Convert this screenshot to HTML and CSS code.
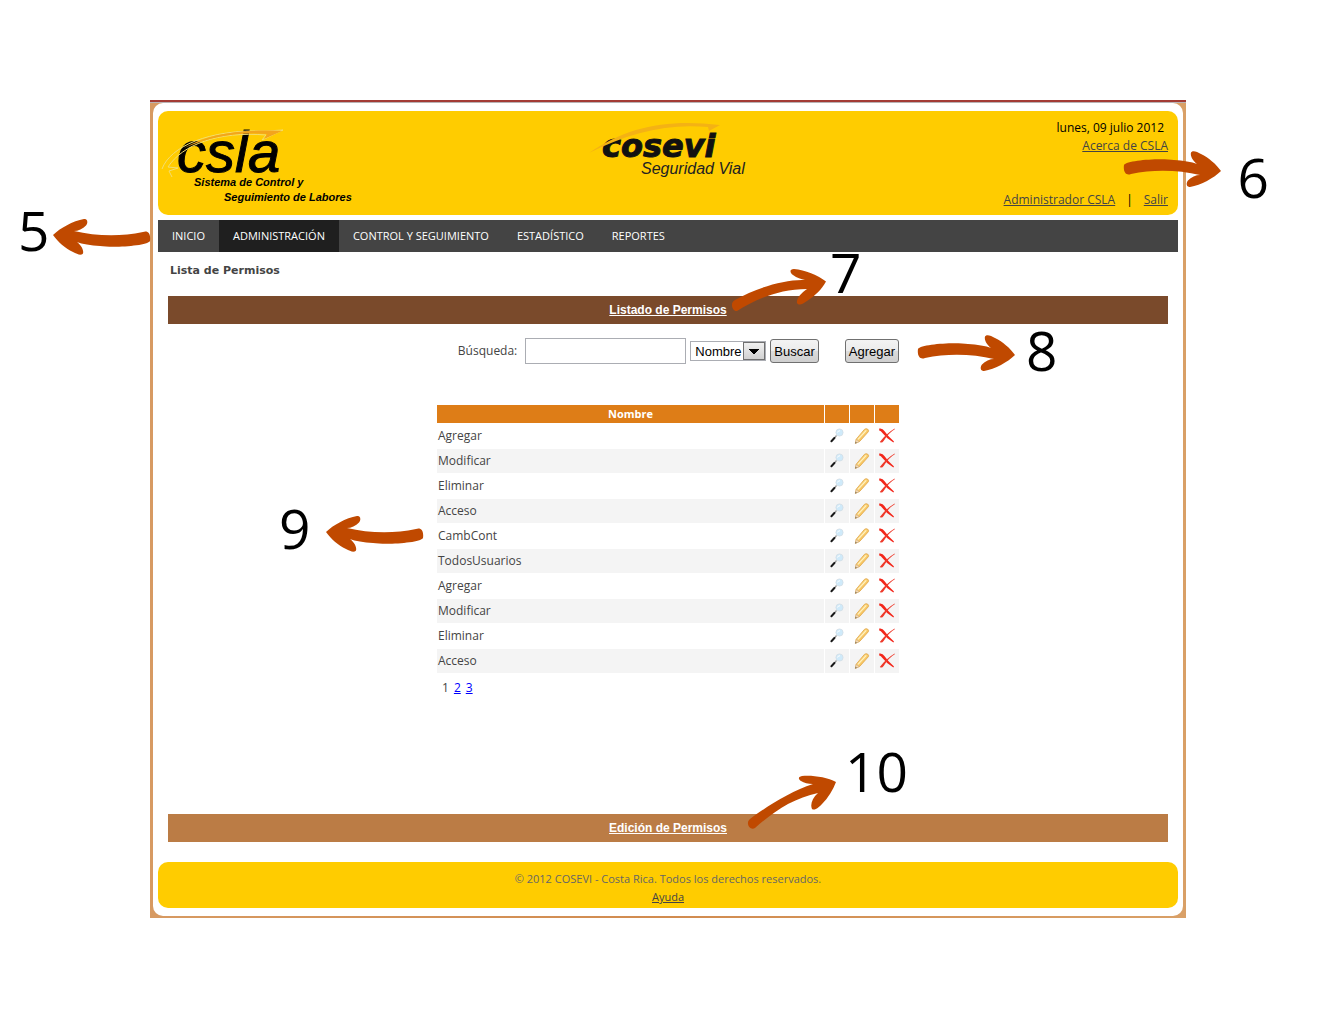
FILE: index.html
```html
<!DOCTYPE html>
<html lang="es">
<head>
<meta charset="utf-8">
<title>CSLA - Lista de Permisos</title>
<link rel="stylesheet" href="styles.css">
</head>
<body>
<svg class="sprite" aria-hidden="true">
  <defs>
    <linearGradient id="wood-pencil" x1="0" y1="0" x2="1" y2="1"><stop offset="0" stop-color="#ffe9a0"/><stop offset="1" stop-color="#f2ad35"/></linearGradient>
    <symbol id="view" viewBox="0 0 16 16">
      <circle cx="10.500" cy="4.500" r="3.600" fill="#cfeafa" stroke="#d3dde4" stroke-width=".8"/>
      <path d="M8.500 4.500Q9 2.500 11 2.800" stroke="#fff" fill="none"/>
      <path d="M7.500 7.500L5.500 10" stroke="#9a9a9a" stroke-width="1.3"/>
      <path d="M5.400 10L2.400 13.200" stroke="#181818" stroke-width="2" stroke-linecap="round"/>
    </symbol>
    <symbol id="edit" viewBox="0 0 16 16">
      <path d="M1.400 15.400L2.200 11.200L10.500 1.300Q12 .2 13.600 1.100Q15.200 2.200 14.300 3.800L5.800 13.300Z" fill="url(#wood-pencil)" stroke="#e0a548" stroke-width=".8"/>
      <path d="M4 11.400L12.300 2.400" stroke="#fff3c4" stroke-width="1.200"/>
      <path d="M1.400 15.400L2.300 11.600L5.200 13.500Z" fill="#f5dfc0" stroke="#c9a274" stroke-width=".5"/>
      <path d="M1.200 15.600L1.700 13.800L2.800 14.800Z" fill="#665"/>
    </symbol>
    <symbol id="delete" viewBox="0 0 16 16">
      <path d="M.2.600Q3.600 0 5.400 3Q8.800 8.200 15 13.400L14.400 14.400Q7.500 10.600 3.200 4.800Q2 2.600.2 2.400Z" fill="#f3271b"/>
      <path d="M15.600.400L15.800 1.200Q9.800 4.600 4.600 13Q3 15.400.8 14Q6.800 5.800 15.600.400Z" fill="#ee3a2b"/>
    </symbol>
    <symbol id="arrow" viewBox="0 0 98 36">
      <path d="M0 16C7 9 20 2 31 0C35-.3 35 4 33 6.500C30 10 25 12 21 12C42 17 67 18 90 13C95 11 98 15 97 22C94 27 60 29 47 27C38 26.500 29 25 24 23C28 26 31 31 30 34.500C28 37 24 35 20 33C12 29 5 23 0 16Z" fill="#c04900"/>
    </symbol>
  </defs>
</svg>

<main class="stage">
  <div class="frame">
    <div class="panel">
      <header class="header">
        <svg class="logo-csla" viewBox="0 0 200 104" role="img" aria-label="CSLA">
          <text class="csla-name" x="19" y="61">csla</text>
          <path d="M4 58C12 36 50 18 108 20L125 19L104 29L108 24C60 20 24 34 10 56L20 57L11 60L14 66" fill="none" stroke="#f3dd70" stroke-width="1"/>
          <path d="M26 37C50 23 80 18 124 20L106 28L109 23C80 21 54 25 26 37Z" fill="#f3a51c"/>
          <text class="csla-tag" x="36" y="75">Sistema de Control y</text>
          <text class="csla-tag" x="66" y="90">Seguimiento de Labores</text>
        </svg>
        <svg class="logo-cosevi" viewBox="0 0 170 70" role="img" aria-label="Cosevi">
          <text class="cosevi-name" x="19" y="46">cosevi</text>
          <path d="M6 42C45 15 85 8 137 14L126 20L125 16C85 12 45 22 6 42Z" fill="#f4b214"/>
          <text class="cosevi-tag" x="58" y="63">Seguridad Vial</text>
        </svg>
        <div class="session">
          <div class="session-info">
            <span class="date">lunes, 09 julio 2012</span>
            <a href="#acerca">Acerca de CSLA</a>
          </div>
          <div class="session-links">
            <a href="#usuario">Administrador CSLA</a>
            <span>|</span>
            <a href="#salir">Salir</a>
          </div>
        </div>
      </header>

      <nav class="menu">
        <a href="#inicio">INICIO</a>
        <a class="active" href="#administracion">ADMINISTRACIÓN</a>
        <a href="#control">CONTROL Y SEGUIMIENTO</a>
        <a href="#estadistico">ESTADÍSTICO</a>
        <a href="#reportes">REPORTES</a>
      </nav>

      <div class="content">
        <h1>Lista de Permisos</h1>
        <h2 class="section-bar"><a href="#listado">Listado de Permisos</a></h2>

        <section class="listing" id="listado">
          <form class="search">
            <label for="busqueda">Búsqueda:</label>
            <input id="busqueda" type="text">
            <select aria-label="Campo de búsqueda"><option>Nombre</option></select>
            <button type="button">Buscar</button>
            <button class="add" type="button">Agregar</button>
          </form>

          <table class="permissions">
            <thead><tr><th>Nombre</th><th class="tool"></th><th class="tool"></th><th class="tool"></th></tr></thead>
            <tbody>
              <tr><td>Agregar</td><td><svg><use href="#view"/></svg></td><td><svg><use href="#edit"/></svg></td><td><svg><use href="#delete"/></svg></td></tr>
              <tr><td>Modificar</td><td><svg><use href="#view"/></svg></td><td><svg><use href="#edit"/></svg></td><td><svg><use href="#delete"/></svg></td></tr>
              <tr><td>Eliminar</td><td><svg><use href="#view"/></svg></td><td><svg><use href="#edit"/></svg></td><td><svg><use href="#delete"/></svg></td></tr>
              <tr><td>Acceso</td><td><svg><use href="#view"/></svg></td><td><svg><use href="#edit"/></svg></td><td><svg><use href="#delete"/></svg></td></tr>
              <tr><td>CambCont</td><td><svg><use href="#view"/></svg></td><td><svg><use href="#edit"/></svg></td><td><svg><use href="#delete"/></svg></td></tr>
              <tr><td>TodosUsuarios</td><td><svg><use href="#view"/></svg></td><td><svg><use href="#edit"/></svg></td><td><svg><use href="#delete"/></svg></td></tr>
              <tr><td>Agregar</td><td><svg><use href="#view"/></svg></td><td><svg><use href="#edit"/></svg></td><td><svg><use href="#delete"/></svg></td></tr>
              <tr><td>Modificar</td><td><svg><use href="#view"/></svg></td><td><svg><use href="#edit"/></svg></td><td><svg><use href="#delete"/></svg></td></tr>
              <tr><td>Eliminar</td><td><svg><use href="#view"/></svg></td><td><svg><use href="#edit"/></svg></td><td><svg><use href="#delete"/></svg></td></tr>
              <tr><td>Acceso</td><td><svg><use href="#view"/></svg></td><td><svg><use href="#edit"/></svg></td><td><svg><use href="#delete"/></svg></td></tr>
            </tbody>
          </table>
          <div class="pager"><span>1</span><a href="#p2">2</a><a href="#p3">3</a></div>
        </section>

        <h2 class="section-bar light"><a href="#edicion">Edición de Permisos</a></h2>
      </div>

      <footer class="footer">
        <span>© 2012 COSEVI - Costa Rica. Todos los derechos reservados.</span>
        <a href="#ayuda">Ayuda</a>
      </footer>
    </div>
  </div>

  <span class="note n5">5</span><svg class="arrow a5"><use href="#arrow"/></svg>
  <span class="note n6">6</span><svg class="arrow turned a6"><use href="#arrow"/></svg>
  <span class="note n7">7</span>
  <svg class="arrow a7" viewBox="731 268 96 44"><path d="M826 281.500C818 275 805 270 794 269C789 269 790 273 793 275C797 278 801 279 805 280C785 279 756 288 735 300C729 303 733 312 737 311C755 300 778 289 807 289C801 293 796 299 797 303C799 306 803 304 807 301C815 296 822 289 826 281.500Z" fill="#c04900"/></svg>
  <span class="note n8">8</span><svg class="arrow turned a8"><use href="#arrow"/></svg>
  <span class="note n9">9</span><svg class="arrow a9"><use href="#arrow"/></svg>
  <span class="note n10">10</span>
  <svg class="arrow a10" viewBox="747 775 90 55"><path d="M836 782C827 777 812 775 802 776C797 777 799 780 801 781C804 783 808 784 813 784C791 791 766 807 750 819C745 823 750 831 755 828C774 811 794 798 818 793C812 798 810 805 812 809C815 811 819 807 822 804C828 798 833 790 836 782Z" fill="#c04900"/></svg>
</main>
</body>
</html>
```
FILE: styles.css
```css
* { box-sizing: border-box; }

body {
  margin: 0;
  background: #fff;
  color: #444;
  font: 11px/18px "Open Sans", "Noto Sans", sans-serif;
}

a { color: #444; }
svg { display: block; overflow: visible; }
.sprite { position: absolute; width: 0; height: 0; }

.stage {
  position: relative;
  padding: 100px 150px;
}

.frame {
  padding: 1px 3px 2px;
  border-top: 2px solid #a33b35;
  background: linear-gradient(90deg, #d79a62, #d18b4f 50%, #d9a067);
  box-shadow: inset 0 1px #b9b3b5;
}

.panel {
  padding: 8px 5px;
  border-radius: 10px;
  background: #fff;
}

.header {
  display: grid;
  grid-template-columns: 1fr 170px 1fr;
  height: 104px;
  border-radius: 10px;
  background: #fc0;
}

.logo-csla { width: 200px; height: 104px; }
.logo-cosevi { width: 170px; height: 70px; }
.csla-name { font: italic 58px "Liberation Sans", Arial, sans-serif; stroke: #000; stroke-width: 1px; fill: #000; }
.csla-tag { font: italic bold 11px "Liberation Sans", Arial, sans-serif; fill: #000; }
.cosevi-name { font: italic bold 32px "DejaVu Sans", Verdana, sans-serif; stroke: #111; stroke-width: 1px; fill: #111; }
.cosevi-tag { font: italic 16px "Liberation Sans", Arial, sans-serif; fill: #222; }

.session {
  display: flex;
  flex-direction: column;
  justify-content: space-between;
  align-items: flex-end;
  padding: 8px 10px 6px;
  font-size: 12px;
}
.session-info { display: flex; flex-direction: column; align-items: flex-end; }
.date { padding-right: 4px; color: #000; }
.session-links { display: flex; gap: 11px; color: #000; }

.menu {
  display: flex;
  margin-top: 5px;
  background: #444;
}
.menu a {
  padding: 0 14px;
  color: #fff;
  line-height: 32px;
  text-decoration: none;
}
.menu .active { background: #1f1f1f; }

.content { padding: 10px 10px 20px; }

h1 {
  margin: 0 0 16px;
  padding-left: 2px;
  font: bold 11px/18px "DejaVu Sans", Verdana, sans-serif;
}

.section-bar {
  margin: 0;
  background: #7a4a2b;
  font: bold 12px/28px "Liberation Sans", Arial, sans-serif;
  text-align: center;
}
.section-bar a { color: #fff; }
.section-bar.light { background: #bb7c45; }

.listing {
  width: 464px;
  min-height: 490px;
  margin: 0 auto;
  padding-top: 14px;
}

.search {
  display: flex;
  align-items: center;
  justify-content: flex-end;
  gap: 4px;
  padding-right: 1px;
  margin-bottom: 40px;
}
.search label { margin-right: 4px; font-size: 12px; }
.search input {
  width: 161px;
  height: 26px;
  border: 1px solid #abadb3;
}
.search select, .search button {
  font: 13px "Liberation Sans", Arial, sans-serif;
  color: #000;
}
.search select {
  appearance: none;
  width: 76px;
  height: 20px;
  padding: 0 0 0 4px;
  border: 1px solid #abadb3;
  border-radius: 0;
  background:
    conic-gradient(from 315deg at 50% 100%, #000 90deg, transparent 0) right 6px center / 10px 5px no-repeat,
    linear-gradient(#707070, #707070) right 0 top / 22px 1px no-repeat,
    linear-gradient(#707070, #707070) right 0 bottom / 22px 1px no-repeat,
    linear-gradient(#707070, #707070) right 0 top / 1px 100% no-repeat,
    linear-gradient(#707070, #707070) right 21px top / 1px 100% no-repeat,
    linear-gradient(#f2f2f2, #cfcfcf) right / 22px 100% no-repeat,
    #fff;
}
.search button {
  height: 24px;
  padding: 0 3px;
  border: 1px solid #707070;
  border-radius: 3px;
  background: linear-gradient(#f3f3f3, #ebebeb 50%, #dcdcdc 50%, #cfcfcf);
}
.search .add { margin-left: 22px; }

.permissions {
  width: 100%;
  border-spacing: 1px;
  font-size: 12px;
}
.permissions th {
  height: 18px;
  padding: 0;
  background: #de7d17;
  color: #fff;
  font-size: 11px;
}
.permissions .tool { width: 24px; }
.permissions td { height: 24px; padding: 0 1px; }
.permissions tr:nth-child(even) td { background: #f4f4f4; }
.permissions td svg { width: 16px; height: 16px; margin: 0 auto; }

.pager {
  display: flex;
  gap: 5px;
  padding: 5px 6px;
  font-size: 12px;
}
.pager a { color: #00f; }

.footer {
  display: flex;
  flex-direction: column;
  align-items: center;
  padding: 8px 0 2px;
  border-radius: 10px;
  background: #fc0;
}
.footer span { color: #666; }

/* Callouts laid over the window */
.note {
  position: absolute;
  color: #000;
  font-size: 55px;
  font-weight: 500;
  line-height: 56px;
}
.arrow { position: absolute; width: 98px; height: 36px; }
.turned { transform: rotate(180deg); }
.n5 { left: 18px; top: 202px; }
.a5 { left: 53px; top: 219px; }
.n6 { right: 67px; top: 149px; }
.a6 { right: 115px; top: 151px; }
.n7 { left: calc(50% + 162px); top: 244px; }
.a7 { left: calc(50% + 63px); top: 268px; width: 96px; height: 44px; }
.n8 { left: calc(50% + 358px); top: 322px; }
.a8 { left: calc(50% + 249px); top: 335px; }
.n9 { left: calc(50% - 389px); top: 500px; }
.a9 { left: calc(50% - 342px); top: 516px; }
.n10 { left: calc(50% + 177px); top: 743px; }
.a10 { left: calc(50% + 79px); top: 775px; width: 90px; height: 55px; }
```
